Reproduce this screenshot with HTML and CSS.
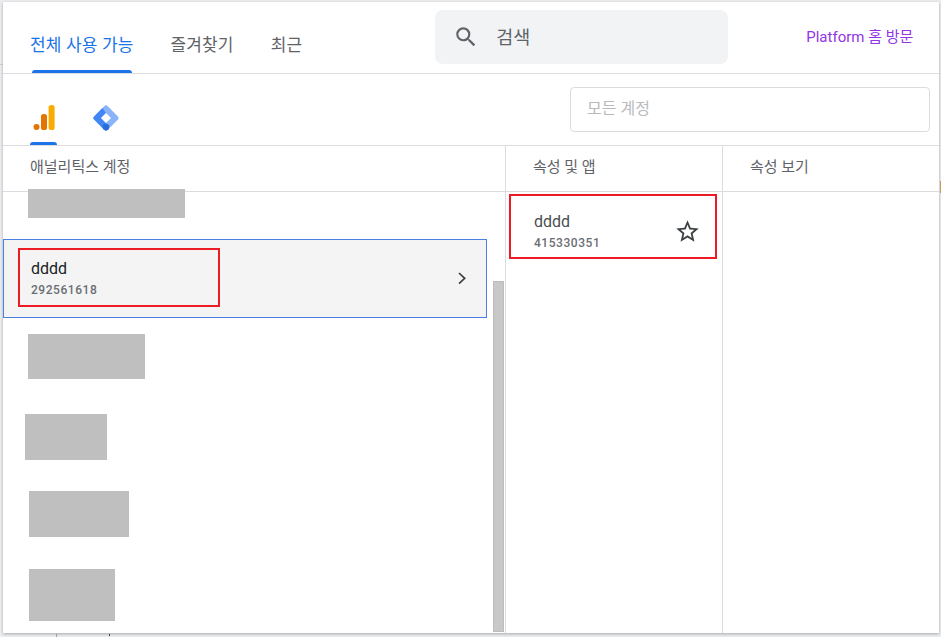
FILE: index.html
```html
<!DOCTYPE html>
<html lang="ko">
<head>
<meta charset="utf-8">
<title>계정 선택</title>
<link rel="stylesheet" href="styles.css">
</head>
<body>
<div class="backdrop">
  <span class="peek peek-rule"></span>
  <span class="peek peek-line"></span>
  <span class="peek peek-dot"></span>
  <span class="peek peek-edge"></span>
  <div class="panel">
    <header class="topbar">
      <nav class="tabs">
        <a class="tab active">전체 사용 가능</a>
        <a class="tab">즐겨찾기</a>
        <a class="tab">최근</a>
      </nav>
      <div class="search">
        <svg class="search-icon" viewBox="0 0 24 24"><path fill="#5f6368" d="M15.5 14h-.79l-.28-.27A6.47 6.47 0 0 0 16 9.5 6.5 6.5 0 1 0 9.5 16c1.61 0 3.09-.59 4.23-1.57l.27.28v.79l5 4.99L20.49 19l-4.99-5zm-6 0C7.01 14 5 11.99 5 9.5S7.01 5 9.5 5 14 7.01 14 9.5 11.99 14 9.5 14z"/></svg>
        <span class="search-text">검색</span>
      </div>
      <a class="home-link">Platform 홈 방문</a>
    </header>
    <div class="products">
      <div class="product-tabs">
        <div class="product active">
          <svg class="ga" viewBox="0 0 24 26"><rect x="16.6" y="0" width="6" height="25" rx="2.6" fill="#f9ab00"/><rect x="9" y="9" width="6" height="16" rx="2.6" fill="#e37400"/><circle cx="4.5" cy="22" r="3" fill="#e37400"/></svg>
        </div>
        <div class="product">
          <svg class="gtm" viewBox="0 0 26 26"><path fill="#8ab4f8" d="M14.8 1.3l9.9 9.9a2.5 2.5 0 0 1 0 3.6l-9.9 9.9a2.5 2.5 0 0 1-3.6 0l-9.9-9.9a2.5 2.5 0 0 1 0-3.6l9.9-9.9a2.5 2.5 0 0 1 3.6 0z"/><path fill="#4285f4" d="M9.5 2.9 1.3 11.2a2.5 2.5 0 0 0 0 3.6l9.9 9.9a2.5 2.5 0 0 0 3.6 0L16 22l-3-4-5-5 5-5z"/><path fill="#fff" d="M13 8l5 5-5 5-5-5z"/><circle cx="13" cy="22" r="3.3" fill="#2a6fd6"/></svg>
        </div>
      </div>
      <div class="filter">모든 계정</div>
    </div>
    <div class="columns">
      <section class="col col-accounts">
        <div class="col-head">애널리틱스 계정</div>
        <div class="col-body">
          <div class="account-row">
            <div class="item-text">
              <div class="item-name strong">dddd</div>
              <div class="item-id">292561618</div>
            </div>
            <svg class="chevron" viewBox="0 0 10 14"><path d="M2 2 7.7 7.3 2 12.6" fill="none" stroke="#3c4043" stroke-width="1.7"/></svg>
            <span class="mark mark-account"></span>
          </div>
          <div class="scrollbar"></div>
          <span class="redact r1"></span>
          <span class="redact r2"></span>
          <span class="redact r3"></span>
          <span class="redact r4"></span>
          <span class="redact r5"></span>
        </div>
      </section>
      <section class="col col-props">
        <div class="col-head">속성 및 앱</div>
        <div class="col-body">
          <div class="prop-row">
            <div class="item-text">
              <div class="item-name">dddd</div>
              <div class="item-id">415330351</div>
            </div>
            <svg class="star" viewBox="0 0 24 24"><path fill="#3c4043" d="M22 9.24l-7.19-.62L12 2 9.19 8.63 2 9.24l5.46 4.73L5.82 21 12 17.27 18.18 21l-1.63-7.03L22 9.24zM12 15.4l-3.76 2.27 1-4.28-3.32-2.88 4.38-.38L12 6.1l1.71 4.04 4.38.38-3.32 2.88 1 4.28L12 15.4z"/></svg>
            <span class="mark mark-prop"></span>
          </div>
        </div>
      </section>
      <section class="col col-views">
        <div class="col-head">속성 보기</div>
        <div class="col-body"></div>
      </section>
    </div>
  </div>
</div>
</body>
</html>
```

FILE: styles.css
```css
* { box-sizing: border-box; }
html, body { margin: 0; height: 100%; }
body {
  background: #eceef0;
  font-family: Roboto, "Noto Sans CJK KR", sans-serif;
  color: #3c4043;
  overflow: hidden;
}
.backdrop { height: 637px; padding: 2px 2px 4px 3px; position: relative; }
.peek { position: absolute; }
.peek-rule { left: 0; top: 64px; width: 3px; height: 1px; background: #cfd1d4; }
.peek-line { left: 56px; top: 634px; width: 1px; height: 3px; background: #a8a8a8; }
.peek-dot { left: 109px; top: 634px; width: 1px; height: 2px; background: #444; }
.peek-edge { left: 940px; top: 181px; width: 1px; height: 12px; background: #d9a15a; }
.panel {
  height: 631px;
  background: #fff;
  display: flex;
  flex-direction: column;
  position: relative;
  box-shadow: 0 1px 3px rgba(60, 64, 67, 0.4);
}
.topbar {
  height: 72px;
  flex: none;
  border-bottom: 1px solid #dadce0;
  display: flex;
  position: relative;
}
.tabs { display: flex; padding-left: 26px; gap: 35px; }
.tab {
  font-size: 17px;
  letter-spacing: 0.15px;
  line-height: 22px;
  padding: 32px 1px 0;
  height: 71px;
  color: #5f6368;
  position: relative;
}
.tab.active { color: #1a73e8; }
.tab.active::after {
  content: "";
  position: absolute;
  left: 3px;
  right: 2px;
  bottom: 0;
  height: 3px;
  background: #1a73e8;
  border-radius: 3px 3px 0 0;
}
.search {
  margin: 8px 0 0 132px;
  width: 293px;
  height: 54px;
  background: #f1f3f4;
  border-radius: 8px;
  display: flex;
  align-items: center;
  padding-left: 18px;
}
.search-icon { width: 26px; height: 26px; flex: none; }
.search-text { font-size: 18.5px; color: #5f6368; margin: -2px 0 0 17px; }
.home-link {
  margin: 26px 0 0 78px;
  font-size: 15px;
  line-height: 18px;
  color: #9334e6;
  white-space: nowrap;
}
.products {
  height: 72px;
  flex: none;
  border-bottom: 1px solid #dadce0;
  display: flex;
  justify-content: space-between;
}
.product-tabs { display: flex; padding-left: 27px; gap: 35px; }
.product {
  width: 27px;
  height: 71px;
  position: relative;
  display: flex;
  justify-content: center;
  padding-top: 31px;
}
.product.active::after {
  content: "";
  position: absolute;
  left: 0;
  right: 0;
  bottom: 0;
  height: 3px;
  background: #1a73e8;
  border-radius: 3px 3px 0 0;
}
.ga { width: 24px; height: 26px; }
.gtm { width: 26px; height: 26px; }
.filter {
  margin: 13px 9px 0 0;
  width: 360px;
  height: 45px;
  border: 1px solid #dadce0;
  border-radius: 4px;
  padding-left: 16px;
  font-size: 16px;
  line-height: 41px;
  color: #b8babd;
}
.columns { flex: 1; display: flex; min-height: 0; }
.col { display: flex; flex-direction: column; border-right: 1px solid #dadce0; }
.col-accounts { width: 503px; }
.col-props { width: 217px; }
.col-views { flex: 1; border-right: 0; }
.col-head {
  height: 46px;
  flex: none;
  border-bottom: 1px solid #dadce0;
  font-size: 15px;
  line-height: 43px;
  color: #5f6368;
  padding-left: 27px;
}
.col-body { flex: 1; position: relative; }
.account-row {
  position: absolute;
  left: 0;
  top: 47px;
  width: 484px;
  height: 79px;
  background: #f4f4f4;
  border: 1px solid #4a80e0;
  padding: 19px 0 0 27px;
  display: flex;
  justify-content: space-between;
}
.prop-row {
  display: flex;
  justify-content: space-between;
  padding: 20px 0 0 28px;
  height: 66px;
  position: relative;
}
.item-name { font-size: 16px; line-height: 20px; color: #4a4d51; }
.item-name.strong { color: #202124; }
.item-id { font-size: 12px; line-height: 16px; margin-top: 3px; color: #6a6e73; letter-spacing: 0.55px; font-weight: 500; }
.chevron { width: 10px; height: 14px; margin: 12px 19px 0 0; }
.star { width: 27px; height: 27px; position: absolute; left: 168px; top: 26px; }
.mark { position: absolute; border: 2px solid #ed1c24; pointer-events: none; }
.mark-account { left: 14px; top: 8px; width: 202px; height: 59px; }
.mark-prop { left: 3px; top: 2px; width: 208px; height: 65px; }
.scrollbar {
  position: absolute;
  left: 490px;
  top: 89px;
  width: 11px;
  height: 351px;
  background: #c8c8c8;
  border: 1px solid #bdbdbd;
}
.redact { position: absolute; background: #bfbfbf; }
.r1 { left: 25px; top: -3px; width: 157px; height: 29px; }
.r2 { left: 25px; top: 142px; width: 117px; height: 45px; }
.r3 { left: 22px; top: 222px; width: 82px; height: 46px; }
.r4 { left: 26px; top: 299px; width: 100px; height: 46px; }
.r5 { left: 26px; top: 377px; width: 86px; height: 52px; }
```
